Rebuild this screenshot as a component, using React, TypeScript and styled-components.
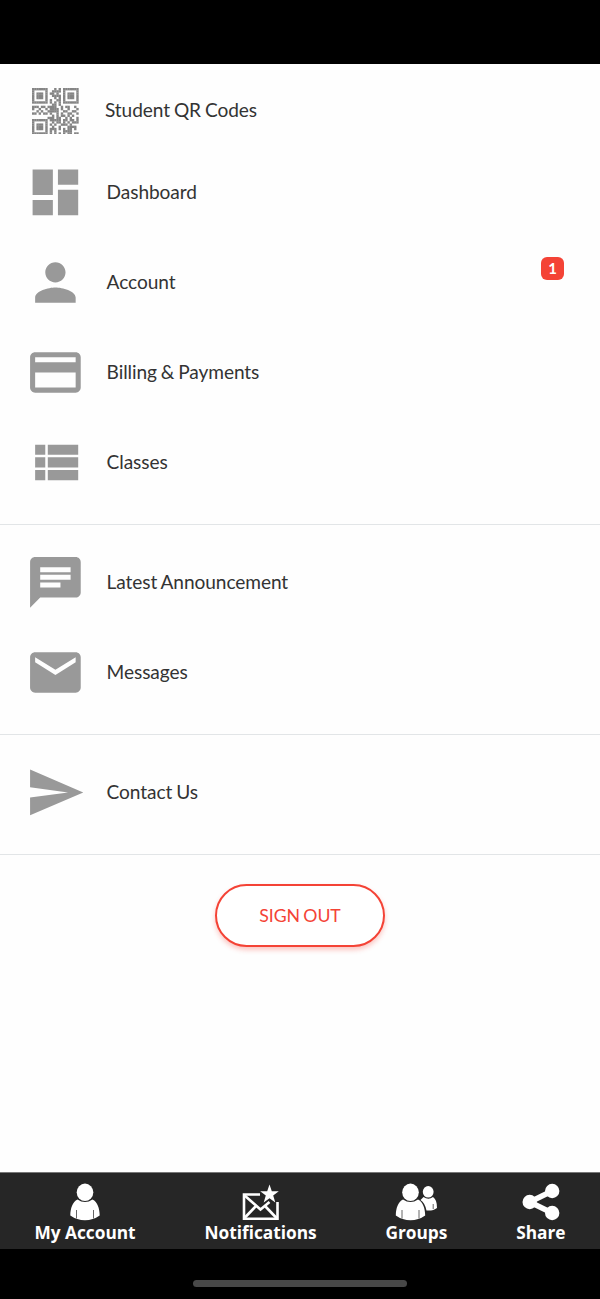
import React from 'react';
import { MdChat, MdDashboard, MdMail, MdPayment, MdPerson, MdSend } from 'react-icons/md';
import styled, { createGlobalStyle } from 'styled-components';

const QR_ROWS = [
  '#######...#.#.#######',
  '#.....#..####.#.....#',
  '#.###.#.##.#..#.###.#',
  '#.###.#..####.#.###.#',
  '#.###.#...#.#.#.###.#',
  '#.....#.#..##.#.....#',
  '#######.#.#.#.#######',
  '.........##.#........',
  '###.##.####..#.##..#.',
  '#..#..#.####.#..#...#',
  '..#.#..#####..##..##.',
  '##.#.##.#..#.#..##..#',
  '.........#.#.##.#.#..',
  '.......###.##..#.#..#',
  '#######.#####.##.##.#',
  '#.....#..#.##.#.#.###',
  '#.###.#.#.#..###.#...',
  '#.###.#..#..#...####.',
  '#.###.#.###.#.#.##.#.',
  '#.....#.#.#...####...',
  '#######.#.#.#.#.##.##',
];

const QrIcon = () => (
  <svg width="46.5" height="46.5" viewBox="0 0 21 21">
    {QR_ROWS.map((row, y) =>
      row
        .split('')
        .map((cell, x) =>
          cell === '#' ? <rect key={`${x}-${y}`} x={x} y={y} width="1.08" height="1.08" /> : null
        )
    )}
  </svg>
);

const ListIcon = () => (
  <svg width="61" height="61" viewBox="0 0 24 24">
    <path d="M4 14h4v-4H4v4zm0 5h4v-4H4v4zM4 9h4V5H4v4zm5 5h12v-4H9v4zm0 5h12v-4H9v4zM9 5v4h12V5H9z" />
  </svg>
);

const AccountIcon = () => (
  <svg width="44" height="38" viewBox="0 0 44 38">
    <ellipse cx="22" cy="9.3" rx="8.3" ry="8.7" />
    <path d="M14.5 16.5Q22 21.5 29.5 16.5C34.5 19 36.5 25 36.7 32.5Q30 37.3 22 37.3T7.3 32.5C7.5 25 9.5 19 14.5 16.5Z" />
    <path className="seam" d="M13.5 27V35.5M30.5 27V35.5" />
  </svg>
);

const NotificationsIcon = () => (
  <svg width="44" height="38" viewBox="0 0 44 38">
    <path className="line" d="M21 11.5H5V35.7H38.5V19" />
    <path className="line" d="M5 12L21.5 26.5L30.5 19M5 35.5L17 23M38 35.5L26 23" />
    <path d="M30.5 1.5L32.8 8.3H39.8L34.2 12.6L36.3 19.4L30.5 15.2L24.7 19.4L26.8 12.6L21.2 8.3H28.2Z" />
  </svg>
);

const GroupsIcon = () => (
  <svg width="44" height="38" viewBox="0 0 44 38">
    <ellipse cx="34.2" cy="8.8" rx="5.4" ry="5.8" />
    <path d="M29.5 14Q34.5 17.5 39 14Q43 16.5 43 25Q39.5 28 32.5 27.5Q31 20 26.5 17Z" />
    <path className="seam" d="M39.2 21V26" />
    <ellipse cx="16.5" cy="9.3" rx="8.3" ry="8.7" />
    <path d="M9 16.5Q16.5 21.5 24 16.5C29 19 31 25 31.2 32.5Q24.5 37.3 16.5 37.3T1.8 32.5C2 25 4 19 9 16.5Z" />
    <path className="seam" d="M8 27V35.5M25 27V35.5" />
  </svg>
);

const ShareIcon = () => (
  <svg width="44" height="38" viewBox="0 0 44 38">
    <path className="link" d="M33.2 8L10.7 19L33.2 30" />
    <circle cx="33.2" cy="8" r="7.2" />
    <circle cx="10.7" cy="19" r="7.2" />
    <circle cx="33.2" cy="30" r="7.2" />
  </svg>
);

const App = () => (
  <>
    <GlobalStyle />
    <Screen>
      <StatusBar />
      <Content>
        <QrItem>
          <QrIconBox>
            <QrIcon />
          </QrIconBox>
          <Label>Student QR Codes</Label>
        </QrItem>
        <MenuItem>
          <IconBox><MdDashboard /></IconBox>
          <Label>Dashboard</Label>
        </MenuItem>
        <MenuItem>
          <IconBox><MdPerson /></IconBox>
          <Label>Account</Label>
          <Badge>1</Badge>
        </MenuItem>
        <MenuItem>
          <IconBox><MdPayment /></IconBox>
          <Label>Billing &amp; Payments</Label>
        </MenuItem>
        <MenuItem>
          <IconBox><ListIcon /></IconBox>
          <Label>Classes</Label>
        </MenuItem>
        <Divider />
        <MenuItem>
          <IconBox><MdChat /></IconBox>
          <Label>Latest Announcement</Label>
        </MenuItem>
        <MenuItem>
          <IconBox><MdMail /></IconBox>
          <Label>Messages</Label>
        </MenuItem>
        <Divider />
        <MenuItem>
          <IconBox><MdSend /></IconBox>
          <Label>Contact Us</Label>
        </MenuItem>
        <Divider />
        <SignOutButton type="button">SIGN OUT</SignOutButton>
      </Content>
      <TabBar>
        <Tab>
          <AccountIcon />
          My Account
        </Tab>
        <Tab>
          <NotificationsIcon />
          Notifications
        </Tab>
        <Tab>
          <GroupsIcon />
          Groups
        </Tab>
        <Tab>
          <ShareIcon />
          Share
        </Tab>
      </TabBar>
      <HomeArea>
        <HomeIndicator />
      </HomeArea>
    </Screen>
  </>
);

const GlobalStyle = createGlobalStyle`
  * {
    box-sizing: border-box;
  }

  body {
    margin: 0;
    background: #fff;
  }
`;

const Screen = styled.div`
  display: flex;
  flex-direction: column;
  width: 600px;
  height: 1299px;
  font-family: Lato, sans-serif;
  background: #fefefe;
`;

const StatusBar = styled.div`
  flex: none;
  height: 64px;
  background: #000;
`;

const Content = styled.main`
  display: flex;
  flex: 1;
  flex-direction: column;
`;

const MenuItem = styled.div`
  display: flex;
  align-items: center;
  height: 90px;
  padding: 0 36px 0 24.5px;
`;

const QrItem = styled(MenuItem)`
  height: 83px;
  padding-top: 8px;
  padding-left: 32px;
`;

const QrIconBox = styled.div`
  display: flex;
  margin: 3px 26.5px 0 0;

  svg {
    fill: #858585;
  }
`;

const IconBox = styled.div`
  display: flex;
  margin: 1.4px 21.3px 0 0;

  svg {
    width: 60.8px;
    height: 60.8px;
    fill: #999;
  }
`;

const Label = styled.span`
  flex: 1;
  font-size: 19.1px;
  line-height: 24px;
  letter-spacing: -0.08px;
  word-spacing: -0.9px;
  color: #333;
`;

const Badge = styled.span`
  align-self: flex-start;
  width: 23px;
  height: 23px;
  margin-top: 20px;
  border-radius: 6px;
  background: #f44336;
  color: #fff;
  font-size: 15px;
  font-weight: 700;
  line-height: 22px;
  text-align: center;
`;

const Divider = styled.hr`
  width: 100%;
  height: 1px;
  margin: 17px 0 12px;
  border: 0;
  background: #e2e5e7;
`;

const SignOutButton = styled.button`
  align-self: center;
  width: 170px;
  height: 63px;
  margin-top: 17px;
  padding: 0;
  border: 2px solid #f44336;
  border-radius: 32px;
  background: #fff;
  box-shadow: 0 3px 5px rgba(244, 67, 54, 0.3);
  color: #f44336;
  font-family: inherit;
  font-size: 17.7px;
  letter-spacing: -0.1px;
  word-spacing: -1px;
`;

const TabBar = styled.nav`
  display: flex;
  flex: none;
  justify-content: space-around;
  height: 77px;
  padding-top: 10px;
  border-top: 1px solid #777;
  background: #262626;
`;

const Tab = styled.div`
  display: flex;
  flex-direction: column;
  align-items: center;
  color: #fff;
  font-family: 'Open Sans', sans-serif;
  font-size: 17.3px;
  font-weight: 700;
  line-height: 24px;

  svg {
    fill: #fff;
  }

  .seam {
    fill: none;
    stroke: #666;
    stroke-width: 1;
  }

  .line {
    fill: none;
    stroke: #fff;
    stroke-width: 2.6;
  }

  .link {
    fill: none;
    stroke: #fff;
    stroke-width: 5.5;
  }
`;

const HomeArea = styled.div`
  display: flex;
  flex: none;
  justify-content: center;
  height: 50px;
  padding-top: 31px;
  background: #000;
`;

const HomeIndicator = styled.div`
  width: 214px;
  height: 7px;
  border-radius: 4px;
  background: #484848;
`;

export default App;
